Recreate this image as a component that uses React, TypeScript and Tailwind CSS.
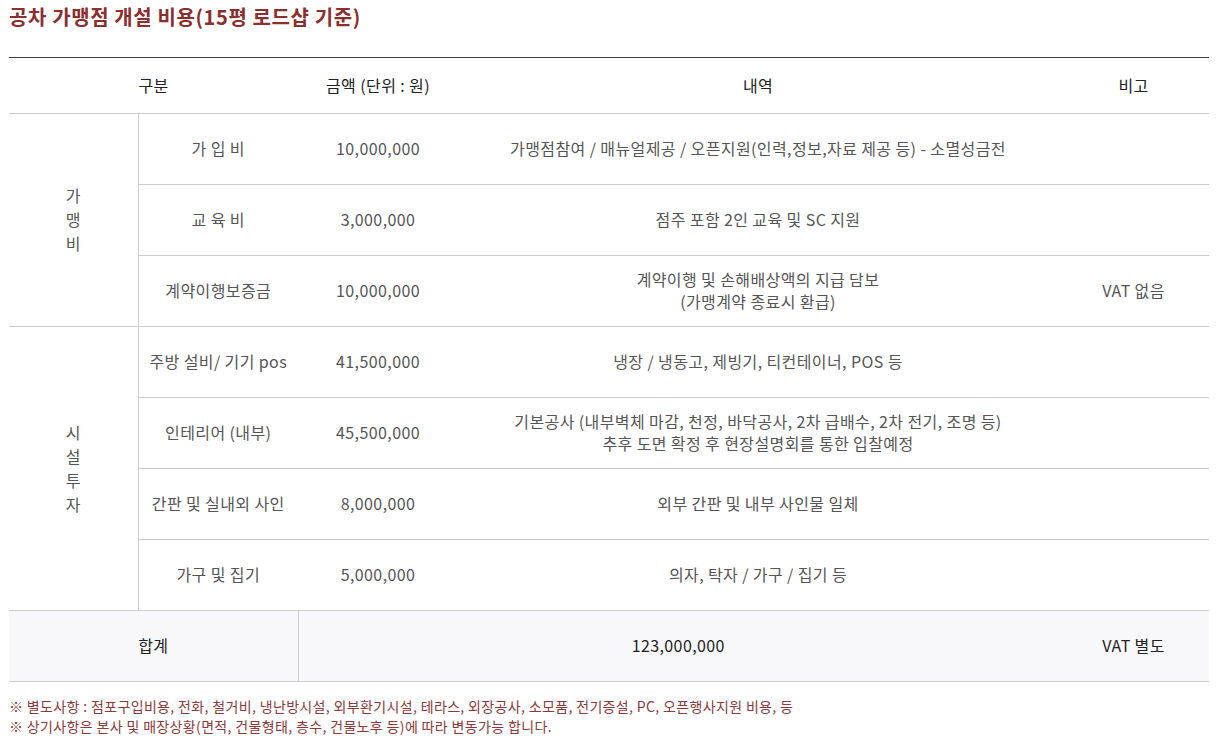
const rows = [
  { item: '가 입 비', amount: '10,000,000', detail: ['가맹점참여 / 매뉴얼제공 / 오픈지원(인력,정보,자료 제공 등) - 소멸성금전'], note: '' },
  { item: '교 육 비', amount: '3,000,000', detail: ['점주 포함 2인 교육 및 SC 지원'], note: '' },
  { item: '계약이행보증금', amount: '10,000,000', detail: ['계약이행 및 손해배상액의 지급 담보', '(가맹계약 종료시 환급)'], note: 'VAT 없음' },
  { item: '주방 설비/ 기기 pos', amount: '41,500,000', detail: ['냉장 / 냉동고, 제빙기, 티컨테이너, POS 등'], note: '' },
  { item: '인테리어 (내부)', amount: '45,500,000', detail: ['기본공사 (내부벽체 마감, 천정, 바닥공사, 2차 급배수, 2차 전기, 조명 등)', '추후 도면 확정 후 현장설명회를 통한 입찰예정'], note: '' },
  { item: '간판 및 실내외 사인', amount: '8,000,000', detail: ['외부 간판 및 내부 사인물 일체'], note: '' },
  { item: '가구 및 집기', amount: '5,000,000', detail: ['의자, 탁자 / 가구 / 집기 등'], note: '' },
];

const groups = [
  { label: ['가', '맹', '비'], start: 0, span: 3 },
  { label: ['시', '설', '투', '자'], start: 3, span: 4 },
];

const cell = 'border-b border-[#cccccc] text-center align-middle font-normal pb-[2px]';

export default function App() {
  return (
    <div className="bg-white min-h-[745px] px-[9px] pt-[3px] font-['Noto_Sans_CJK_KR','Noto_Sans',sans-serif]">
      {/* Title */}
      <h2 className="text-[20px] font-bold leading-[28px] text-[#8b2e2e] tracking-[0.6px]">
        공차 가맹점 개설 비용(15평 로드샵 기준)
      </h2>

      <table className="mt-[26px] w-[1200px] border-collapse table-fixed border-t border-[#444444] text-[16px] tracking-[0.4px]">
        <colgroup>
          <col className="w-[129px]" />
          <col className="w-[160px]" />
          <col className="w-[160px]" />
          <col className="w-[600px]" />
          <col className="w-[151px]" />
        </colgroup>
        <thead>
          <tr className="h-[56px] text-[#222222]">
            <th colSpan={2} className={cell}>구분</th>
            <th className={cell}>금액 (단위 : 원)</th>
            <th className={cell}>내역</th>
            <th className={cell}>비고</th>
          </tr>
        </thead>
        <tbody className="text-[#555555]">
          {rows.map((row, i) => {
            const group = groups.find((g) => g.start === i);
            return (
              <tr key={row.item} className="h-[71px]">
                {group && (
                  <td rowSpan={group.span} className={`${cell} border-r leading-[24px]`}>
                    {group.label.map((ch) => (
                      <div key={ch}>{ch}</div>
                    ))}
                  </td>
                )}
                <td className={cell}>{row.item}</td>
                <td className={cell}>{row.amount}</td>
                <td className={`${cell} leading-[22px]`}>
                  {row.detail.map((line) => (
                    <div key={line}>{line}</div>
                  ))}
                </td>
                <td className={cell}>{row.note}</td>
              </tr>
            );
          })}
          <tr className="h-[71px] bg-[#f8f8fa] text-[#222222]">
            <td colSpan={2} className={`${cell} border-r`}>합계</td>
            <td colSpan={2} className={cell}>123,000,000</td>
            <td className={cell}>VAT 별도</td>
          </tr>
        </tbody>
      </table>

      {/* Notes */}
      <div className="mt-[14px] text-[14px] leading-[20px] text-[#8b3a3a] tracking-[0.35px]">
        <p>※ 별도사항 : 점포구입비용, 전화, 철거비, 냉난방시설, 외부환기시설, 테라스, 외장공사, 소모품, 전기증설, PC, 오픈행사지원 비용, 등</p>
        <p>※ 상기사항은 본사 및 매장상황(면적, 건물형태, 층수, 건물노후 등)에 따라 변동가능 합니다.</p>
      </div>
    </div>
  );
}
